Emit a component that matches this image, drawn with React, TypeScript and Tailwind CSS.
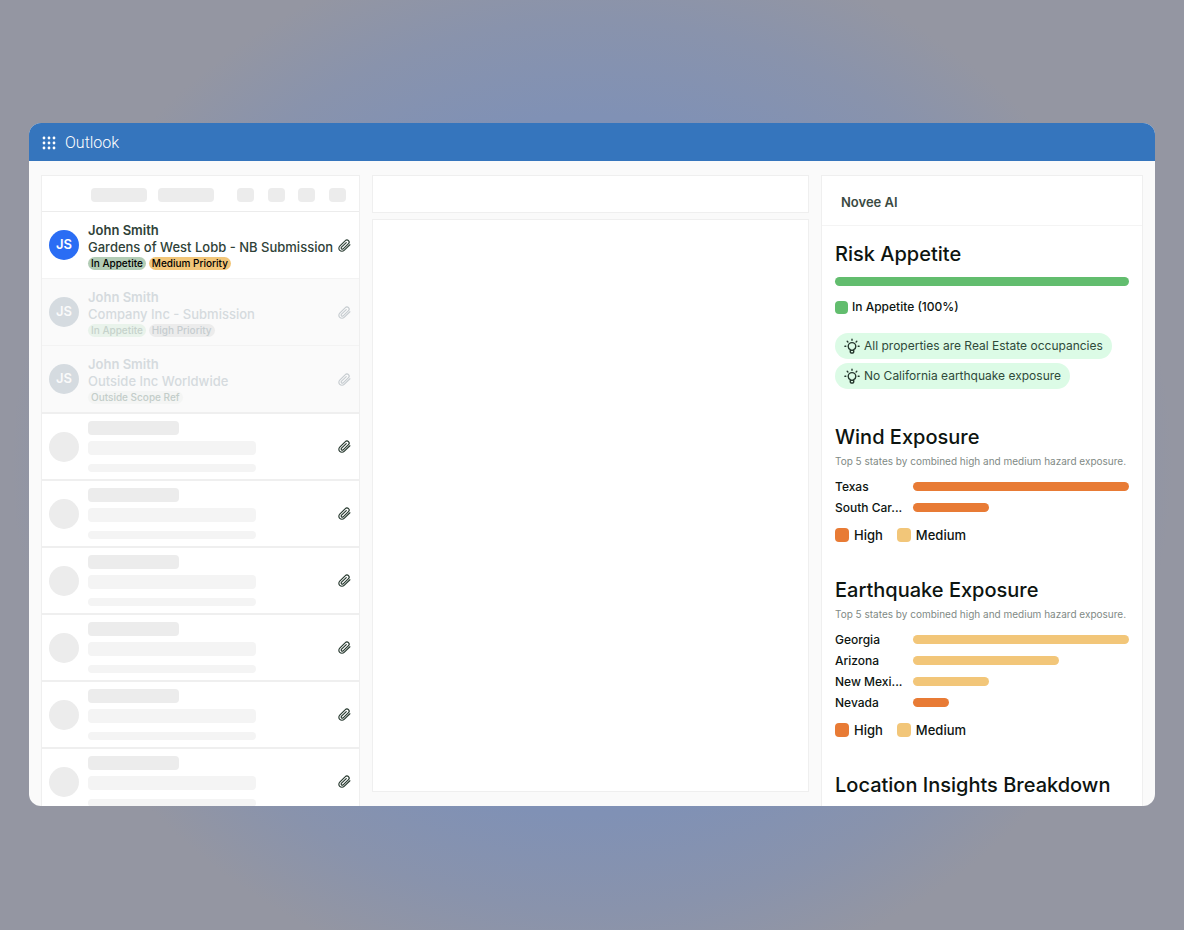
interface Badge {
  label: string;
  className: string;
}

interface MailRowProps {
  sender: string;
  subject: string;
  badges: Badge[];
  active?: boolean;
}

interface StateBar {
  state: string;
  percent: number;
  level: 'high' | 'medium';
}

const mails: MailRowProps[] = [
  {
    sender: 'John Smith',
    subject: 'Gardens of West Lobb - NB Submission',
    active: true,
    badges: [
      { label: 'In Appetite', className: 'bg-[#b2ccb5] text-black' },
      { label: 'Medium Priority', className: 'bg-[#f2c679] text-black' },
    ],
  },
  {
    sender: 'John Smith',
    subject: 'Company Inc - Submission',
    badges: [
      { label: 'In Appetite', className: 'bg-[#e9f3eb] text-[#c6d2cb]' },
      { label: 'High Priority', className: 'bg-[#ececec] text-[#c6cdd0]' },
    ],
  },
  {
    sender: 'John Smith',
    subject: 'Outside Inc Worldwide',
    badges: [{ label: 'Outside Scope Ref', className: 'bg-[#f4f5f4] text-[#c3cdc9]' }],
  },
];

const wind: StateBar[] = [
  { state: 'Texas', percent: 100, level: 'high' },
  { state: 'South Car...', percent: 35, level: 'high' },
];

const earthquake: StateBar[] = [
  { state: 'Georgia', percent: 100, level: 'medium' },
  { state: 'Arizona', percent: 67.5, level: 'medium' },
  { state: 'New Mexi...', percent: 35, level: 'medium' },
  { state: 'Nevada', percent: 16.5, level: 'high' },
];

const insights = ['All properties are Real Estate occupancies', 'No California earthquake exposure'];

const AppGrid = () => (
  <svg width="14" height="14" viewBox="0 0 14 14" fill="white" aria-hidden="true">
    {[2, 7, 12].map((y) => [2, 7, 12].map((x) => <circle key={`${x}-${y}`} cx={x} cy={y} r="1.4" />))}
  </svg>
);

const Clip = ({ className }: { className: string }) => (
  <svg
    width="13"
    height="13"
    viewBox="0 0 14 14"
    fill="none"
    stroke="currentColor"
    strokeWidth="1.25"
    strokeLinecap="round"
    strokeLinejoin="round"
    className={`mr-px shrink-0 ${className}`}
    aria-hidden="true"
  >
    <path d="M12.800 6.200 6.600 12.200a3.200 3.200 0 0 1-4.700 0 3.200 3.200 0 0 1 0-4.600l6-5.900a2.350 2.350 0 0 1 3.400 0 2.350 2.350 0 0 1 0 3.300L5.600 10.600a1.250 1.250 0 0 1-1.800 0 1.250 1.250 0 0 1 0-1.800L8.900 3.900" />
  </svg>
);

const Bulb = () => (
  <svg
    width="16"
    height="16"
    viewBox="0 0 16 16"
    fill="none"
    stroke="#26382e"
    strokeWidth="1.4"
    strokeLinecap="round"
    strokeLinejoin="round"
    className="shrink-0"
    aria-hidden="true"
  >
    <path d="M6.300 11.600C5 10.900 4.200 9.800 4.200 8.400a3.800 3.800 0 0 1 7.600 0c0 1.400-.8 2.500-2.100 3.200v2.400a1 1 0 0 1-1 1H7.300a1 1 0 0 1-1-1zM6.300 12.200h3.400" />
    <path d="M8 1.200v1.100M3.200 3.200l.7.7M12.800 3.200l-.7.7M.9 8.300h.9M14.200 8.300h.9" />
  </svg>
);

const MailRow = ({ sender, subject, badges, active = false }: MailRowProps) => (
  <li
    className={`flex h-[67px] shrink-0 items-center border-t px-[7px] ${
      active ? 'border-[#ececec] bg-white text-[#2f4238]' : 'border-[#f3f3f3] bg-[#fafafa] text-[#d5dade]'
    }`}
  >
    <div
      className={`flex size-[30px] shrink-0 items-center justify-center rounded-full text-[13px] font-semibold ${
        active ? 'bg-[#2a6df4] text-white' : 'bg-[#d5dbe0] text-[#fafafa]'
      }`}
    >
      JS
    </div>
    <div className="ml-[9px] min-w-0 flex-1 pt-[2px]">
      <p className="text-[13px] leading-[17px] font-semibold">{sender}</p>
      <p className="text-[13px] leading-[17px] font-medium whitespace-nowrap">{subject}</p>
      <div className="mt-px flex gap-[3px]">
        {badges.map((badge) => (
          <span
            key={badge.label}
            className={`rounded-full px-[3px] text-[10px] leading-[13px] font-medium ${badge.className}`}
          >
            {badge.label}
          </span>
        ))}
      </div>
    </div>
    <Clip className={active ? 'text-[#2f4238]' : 'text-[#c6ccd0]'} />
  </li>
);

const SkeletonRow = () => (
  <li className="flex h-[67px] shrink-0 items-center border-t-2 border-[#efefef] bg-white px-[7px]">
    <div className="size-[30px] shrink-0 rounded-full bg-[#ececec]" />
    <div className="ml-[9px] flex-1">
      <div className="h-[14px] w-[91px] rounded bg-[#ececec]" />
      <div className="mt-[6px] h-[14px] w-[168px] rounded bg-[#f4f4f4]" />
      <div className="mt-[9px] h-2 w-[168px] rounded bg-[#f4f4f4]" />
    </div>
    <Clip className="text-[#26382e]" />
  </li>
);

const ExposureSection = ({ title, bars }: { title: string; bars: StateBar[] }) => (
  <section className="mb-[34px]">
    <h2 className="text-[20px] leading-7 font-medium">{title}</h2>
    <p className="mt-[3px] text-[10px] leading-[14px] whitespace-nowrap text-[#7f8a85]">
      Top 5 states by combined high and medium hazard exposure.
    </p>
    <ul className="mt-2">
      {bars.map((bar) => (
        <li key={bar.state} className="flex h-[21px] items-center">
          <span className="w-[78px] shrink-0 text-xs font-medium">{bar.state}</span>
          <div className="flex-1">
            <div
              className={`h-[9px] rounded-full ${bar.level === 'high' ? 'bg-[#e87b35]' : 'bg-[#f2c679]'}`}
              style={{ width: `${bar.percent}%` }}
            />
          </div>
        </li>
      ))}
    </ul>
    <div className="mt-[10px] flex gap-[14px] text-[13px] leading-[14px] font-medium">
      <span className="flex items-center gap-[5px]">
        <i className="size-[14px] rounded bg-[#e87b35]" />
        High
      </span>
      <span className="flex items-center gap-[5px]">
        <i className="size-[14px] rounded bg-[#f2c679]" />
        Medium
      </span>
    </div>
  </section>
);

export default function App() {
  return (
    <div className="flex h-screen flex-col bg-[#9496a2] bg-[radial-gradient(ellipse_49%_57%_at_50%_50%,#7b90c0_0%,#8091b5_66%,#8993ac_84%,#9496a2_100%)] px-[29px] pt-[123px] pb-[124px] font-[Inter,sans-serif]">
      <main className="flex min-h-0 flex-1 flex-col overflow-hidden rounded-xl bg-[#fafafa]">
        <header className="flex h-[38px] shrink-0 items-center gap-[9px] bg-[#3575bd] px-[13px] pt-px text-white">
          <AppGrid />
          <h1 className="font-[Roboto,sans-serif] text-[16px] font-light">Outlook</h1>
        </header>

        <div className="grid min-h-0 flex-1 grid-cols-[319px_1fr_322px] gap-3 px-3 pt-[14px]">
          {/* Inbox */}
          <div className="flex min-h-0 flex-col overflow-hidden border border-b-0 border-[#efefef] bg-white">
            <div className="flex h-[35px] shrink-0 items-center pt-[3px] pr-[13px] pl-[49px]">
              <div className="h-[14px] w-14 rounded bg-[#ececec]" />
              <div className="ml-[11px] h-[14px] w-14 rounded bg-[#ececec]" />
              <div className="ml-[23px] flex flex-1 justify-between">
                {[0, 1, 2, 3].map((i) => (
                  <div key={i} className="h-[14px] w-[17px] rounded bg-[#ececec]" />
                ))}
              </div>
            </div>
            <ul>
              {mails.map((mail) => (
                <MailRow key={mail.subject} {...mail} />
              ))}
              {[0, 1, 2, 3, 4, 5].map((i) => (
                <SkeletonRow key={i} />
              ))}
            </ul>
          </div>

          {/* Reading pane */}
          <div className="flex min-h-0 flex-col gap-[6px] pb-[14px]">
            <div className="h-[38px] border border-[#efefef] bg-white" />
            <div className="flex-1 border border-[#efefef] bg-white" />
          </div>

          {/* Assistant panel */}
          <aside className="min-h-0 overflow-hidden border border-b-0 border-[#efefef] bg-white text-[#0d1410]">
            <div className="flex h-[50px] items-center border-b border-[#f4f4f4] px-[19px] pt-1 text-[13px] font-semibold text-[#3a4a42]">
              Novee AI
            </div>
            <div className="px-[13px] pt-[14px]">
              <section className="mb-[34px]">
                <h2 className="text-[20px] leading-7 font-medium">Risk Appetite</h2>
                <div className="mt-[9px] h-[9px] rounded-full bg-[#62bd6e]" />
                <p className="mt-[14px] flex items-center gap-1 text-xs leading-[14px] font-medium">
                  <i className="size-[13px] rounded bg-[#62bd6e]" />
                  In Appetite (100%)
                </p>
                <ul className="mt-[19px] flex flex-col items-start gap-1">
                  {insights.map((text) => (
                    <li
                      key={text}
                      className="flex h-[26px] items-center gap-1 rounded-full bg-[#dcfbe6] px-[9px] text-xs whitespace-nowrap text-[#2f4a3a]"
                    >
                      <Bulb />
                      {text}
                    </li>
                  ))}
                </ul>
              </section>
              <ExposureSection title="Wind Exposure" bars={wind} />
              <ExposureSection title="Earthquake Exposure" bars={earthquake} />
              <h2 className="text-[20px] leading-7 font-medium whitespace-nowrap">Location Insights Breakdown</h2>
            </div>
          </aside>
        </div>
      </main>
    </div>
  );
}
